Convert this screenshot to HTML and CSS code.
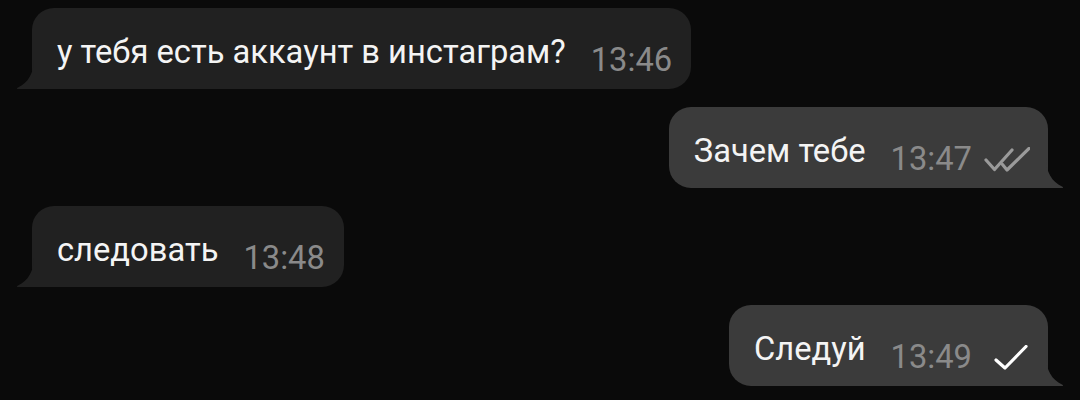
FILE: index.html
```html
<!DOCTYPE html>
<html lang="ru">
<head>
  <meta charset="UTF-8">
  <meta name="viewport" content="width=device-width, initial-scale=1.0">
  <title>Чат</title>
  <link rel="stylesheet" href="styles.css">
</head>
<body>
  <div class="chat">
    <div class="row in">
      <div class="bubble">
        <svg class="tail" viewBox="0 0 18 30"><path d="M18 0 C18 14 12 24 2 28.5 Q0 29.5 1.5 30 L18 30 Z"/></svg>
        <span class="text">у тебя есть аккаунт в инстаграм?</span>
        <span class="time">13:46</span>
      </div>
    </div>

    <div class="row out">
      <div class="bubble">
        <span class="text">Зачем тебе</span>
        <span class="time">13:47</span>
        <svg class="check read" viewBox="0 0 46 26">
          <polyline points="2,13 10.5,22.5 28,3"/>
          <polyline points="18.5,17.5 23,23 45,1.5"/>
        </svg>
        <svg class="tail" viewBox="0 0 18 30"><path d="M0 0 C0 14 6 24 16 28.5 Q18 29.5 16.5 30 L0 30 Z"/></svg>
      </div>
    </div>

    <div class="row in">
      <div class="bubble">
        <svg class="tail" viewBox="0 0 18 30"><path d="M18 0 C18 14 12 24 2 28.5 Q0 29.5 1.5 30 L18 30 Z"/></svg>
        <span class="text">следовать</span>
        <span class="time">13:48</span>
      </div>
    </div>

    <div class="row out">
      <div class="bubble">
        <span class="text">Следуй</span>
        <span class="time">13:49</span>
        <svg class="check sent" viewBox="0 0 46 26">
          <polyline points="12,15 21,23 42,1.5"/>
        </svg>
        <svg class="tail" viewBox="0 0 18 30"><path d="M0 0 C0 14 6 24 16 28.5 Q18 29.5 16.5 30 L0 30 Z"/></svg>
      </div>
    </div>
  </div>
</body>
</html>
```

FILE: styles.css
```css
body {
  margin: 0;
  background: #0a0a0a;
  font-family: Roboto, "Noto Sans", sans-serif;
}

.chat {
  display: flex;
  flex-direction: column;
  gap: 18px;
  padding: 8px 32px 0;
}

.row {
  display: flex;
}

.row.out {
  justify-content: flex-end;
}

.bubble {
  position: relative;
  display: flex;
  align-items: flex-end;
  height: 81px;
  padding: 0 19px 0 25px;
  border-radius: 22px;
  background: #212121;
}

.in .bubble {
  border-bottom-left-radius: 0;
}

.out .bubble {
  background: #3b3b3b;
  padding-right: 18px;
  border-bottom-right-radius: 0;
}

/* little tail at the bottom corner */
.tail {
  position: absolute;
  bottom: 0;
  width: 18px;
  height: 30px;
  fill: #212121;
}

.in .tail {
  left: -16px;
}

.out .tail {
  right: -16px;
  fill: #3b3b3b;
}

.text {
  color: #f4f4f4;
  font-size: 32.7px;
  line-height: 1;
  margin-bottom: 20px;
}

.time {
  color: #8a8a8a;
  font-size: 32.7px;
  line-height: 1;
  margin-left: 25px;
  margin-bottom: 12px;
}

.check {
  width: 46px;
  height: 26px;
  margin-left: 12px;
  margin-bottom: 15px;
  fill: none;
  stroke-width: 3.2;
  stroke-linecap: round;
  stroke-linejoin: round;
}

.check.read {
  stroke: #9a9a9a;
}

.check.sent {
  stroke: #ffffff;
}
```
